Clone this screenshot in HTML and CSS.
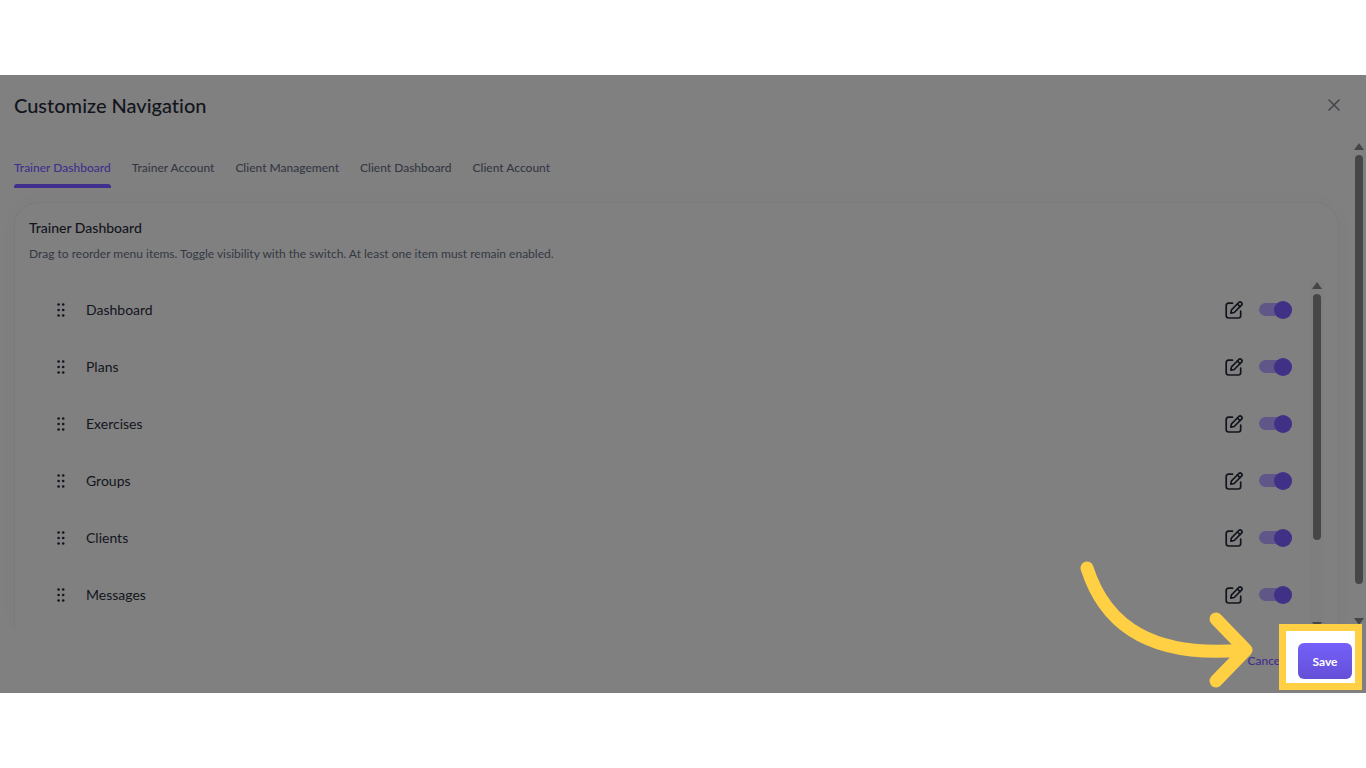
FILE: index.html
```
<!DOCTYPE html>
<html lang="en">
<head>
<meta charset="utf-8">
<meta name="viewport" content="width=device-width, initial-scale=1">
<title>Customize Navigation</title>
<link rel="stylesheet" href="styles.css">
</head>
<body>
<svg class="defs" aria-hidden="true">
  <symbol id="grip" viewBox="0 0 8 14"><g fill="currentColor"><circle cx="1.6" cy="1.5" r="1.3"/><circle cx="6.2" cy="1.5" r="1.3"/><circle cx="1.6" cy="7" r="1.3"/><circle cx="6.2" cy="7" r="1.3"/><circle cx="1.6" cy="12.5" r="1.3"/><circle cx="6.2" cy="12.5" r="1.3"/></g></symbol>
  <symbol id="edit" viewBox="0 0 18 18"><g fill="none" stroke="currentColor" stroke-width="1.7" stroke-linecap="round" stroke-linejoin="round"><path d="M7.5 2.2H3.6Q1.2 2.2 1.2 4.6V14.6Q1.2 17 3.6 17H13.3Q15.7 17 15.7 14.6V10.2"/><path d="M5.8 12.2L6.5 8.8L13.8 1.5Q15.2 .3 16.5 1.6Q17.7 2.9 16.5 4.2L9.2 11.5Z"/><path d="M12.4 3L15 5.6"/></g></symbol>
</svg>
<main class="page">
  <section class="dialog" aria-labelledby="title">
    <header class="header">
      <h1 id="title">Customize Navigation</h1>
      <button class="close" type="button" aria-label="Close"><svg viewBox="0 0 12 12"><path d="M1 1L11 11M11 1L1 11" fill="none" stroke="currentColor" stroke-width="1.6" stroke-linecap="round"/></svg></button>
    </header>
    <div class="body">
      <div class="content">
        <nav class="tabs">
          <a class="tab active" href="#trainer-dashboard">Trainer Dashboard</a>
          <a class="tab" href="#trainer-account">Trainer Account</a>
          <a class="tab" href="#client-management">Client Management</a>
          <a class="tab" href="#client-dashboard">Client Dashboard</a>
          <a class="tab" href="#client-account">Client Account</a>
        </nav>
        <section class="card">
          <h2>Trainer Dashboard</h2>
          <p class="hint">Drag to reorder menu items. Toggle visibility with the switch. At least one item must remain enabled.</p>
          <div class="list-area">
            <ul class="list">
              <li class="row"><svg class="grip"><use href="#grip"/></svg><label for="i1">Dashboard</label><button class="edit" type="button" aria-label="Edit Dashboard"><svg><use href="#edit"/></svg></button><input class="switch" id="i1" type="checkbox" checked></li>
              <li class="row"><svg class="grip"><use href="#grip"/></svg><label for="i2">Plans</label><button class="edit" type="button" aria-label="Edit Plans"><svg><use href="#edit"/></svg></button><input class="switch" id="i2" type="checkbox" checked></li>
              <li class="row"><svg class="grip"><use href="#grip"/></svg><label for="i3">Exercises</label><button class="edit" type="button" aria-label="Edit Exercises"><svg><use href="#edit"/></svg></button><input class="switch" id="i3" type="checkbox" checked></li>
              <li class="row"><svg class="grip"><use href="#grip"/></svg><label for="i4">Groups</label><button class="edit" type="button" aria-label="Edit Groups"><svg><use href="#edit"/></svg></button><input class="switch" id="i4" type="checkbox" checked></li>
              <li class="row"><svg class="grip"><use href="#grip"/></svg><label for="i5">Clients</label><button class="edit" type="button" aria-label="Edit Clients"><svg><use href="#edit"/></svg></button><input class="switch" id="i5" type="checkbox" checked></li>
              <li class="row"><svg class="grip"><use href="#grip"/></svg><label for="i6">Messages</label><button class="edit" type="button" aria-label="Edit Messages"><svg><use href="#edit"/></svg></button><input class="switch" id="i6" type="checkbox" checked></li>
            </ul>
            <div class="scrollbar inner" aria-hidden="true"><i class="up"></i><i class="thumb"></i><i class="down"></i></div>
          </div>
        </section>
      </div>
      <div class="scrollbar outer" aria-hidden="true"><i class="up"></i><i class="thumb"></i><i class="down"></i></div>
    </div>
    <footer class="footer">
      <button class="cancel" type="button">Cancel</button>
      <div class="spotlight"><button class="save" type="button">Save</button></div>
      <svg class="arrow" viewBox="0 0 176 134" aria-hidden="true"><g fill="none" stroke="#ffd043" stroke-width="13" stroke-linecap="round" stroke-linejoin="round"><path d="M8 9C27 69 76 99 164 91"/><path d="M137 60L167 91L137 122"/></g></svg>
    </footer>
  </section>
</main>
</body>
</html>
```
FILE: styles.css
```
* { box-sizing: border-box; }

body {
  margin: 0;
  background: #fff;
  color: #13151d;
  font-family: Lato, "Liberation Sans", sans-serif;
  font-variant-ligatures: none;
}

button { padding: 0; border: 0; background: none; color: inherit; font: inherit; cursor: pointer; }
h1, h2, p, ul { margin: 0; padding: 0; }
.defs { position: absolute; width: 0; height: 0; }

.page {
  display: flex;
  flex-direction: column;
  justify-content: center;
  min-height: 100vh;
}
.dialog { background: #808080; }

.header {
  display: flex;
  align-items: center;
  justify-content: space-between;
  padding: 16px 26px 18px 14px;
}
h1 { font-size: 20px; line-height: 28px; font-weight: 500; }
.close { display: flex; width: 12px; height: 12px; color: #44464b; }
.close svg { width: 12px; height: 12px; }

.body { display: flex; overflow: hidden; }
.content { flex: 1; padding: 14px 13px 0 14px; }

.tabs { display: flex; gap: 21px; }
.tab {
  padding: 9px 0 8px;
  border-bottom: 4px solid transparent;
  color: #343843;
  font-size: 12px;
  line-height: 16px;
  font-weight: 500;
  text-decoration: none;
}
.tab.active { position: relative; color: #402f8c; }
.tab.active::after {
  content: "";
  position: absolute;
  inset: auto 0 -4px;
  height: 4px;
  border-radius: 3px 3px 0 0;
  background: #402f8c;
}

.card {
  margin-top: 14px;
  padding: 15px 14px 0;
  border: 1px solid #7a7a7a;
  border-bottom: 0;
  border-radius: 24px 24px 0 0;
  box-shadow: 0 0 24px rgba(0, 0, 0, .02);
}
h2 { font-size: 14px; line-height: 20px; font-weight: 500; }
.hint { margin-top: 6px; color: #343843; font-size: 12px; line-height: 20px; }

.list-area { display: flex; margin-top: 17px; }
.list { flex: 1; padding-bottom: 6px; list-style: none; }
.row {
  display: flex;
  align-items: center;
  height: 57px;
  padding: 0 18px 0 28px;
}
.row label { flex: 1; margin-left: 21px; font-size: 14px; line-height: 20px; }
.grip { width: 8px; height: 14px; }
.edit { display: flex; margin-right: 16px; }
.edit svg { width: 18px; height: 18px; }
.switch {
  appearance: none;
  display: flex;
  align-items: center;
  justify-content: flex-end;
  width: 33px;
  height: 13px;
  margin: 0;
  border-radius: 7px;
  background: #605788;
}
.switch::before {
  content: "";
  flex: none;
  width: 18px;
  height: 18px;
  border-radius: 50%;
  background: #403086;
}

.scrollbar { display: flex; flex-direction: column; align-items: center; width: 14px; }
.up, .down { width: 10px; height: 7px; background: #464646; }
.up { clip-path: polygon(50% 0, 100% 100%, 0 100%); }
.down { margin-top: auto; clip-path: polygon(0 0, 100% 0, 50% 100%); }
.thumb { width: 8px; margin-top: 5px; border-radius: 4px; background: #464646; }
.outer { padding: 6px 0 4px; }
.outer .thumb { height: 89%; }
.inner { padding-top: 1px; background: #7e7e7e; }
.inner .thumb { height: 71%; }

.footer {
  position: relative;
  display: flex;
  align-items: center;
  justify-content: flex-end;
  gap: 15px;
  padding: 14px 14px 14px 0;
}
.cancel { color: #402f8c; font-size: 12px; line-height: 16px; font-weight: 500; }
.spotlight { position: relative; }
.spotlight::before {
  content: "";
  position: absolute;
  inset: -19px -10px -11px -19px;
  border: 7px solid #ffd043;
  background: #fff;
}
.save {
  position: relative;
  min-width: 54px;
  height: 36px;
  padding: 0 14px;
  border-radius: 6px;
  background: linear-gradient(#7560fb, #6450d6);
  color: #fff;
  font-size: 12px;
  font-weight: 700;
}
.arrow { position: absolute; right: 111px; bottom: 0; width: 176px; height: 134px; }
```
